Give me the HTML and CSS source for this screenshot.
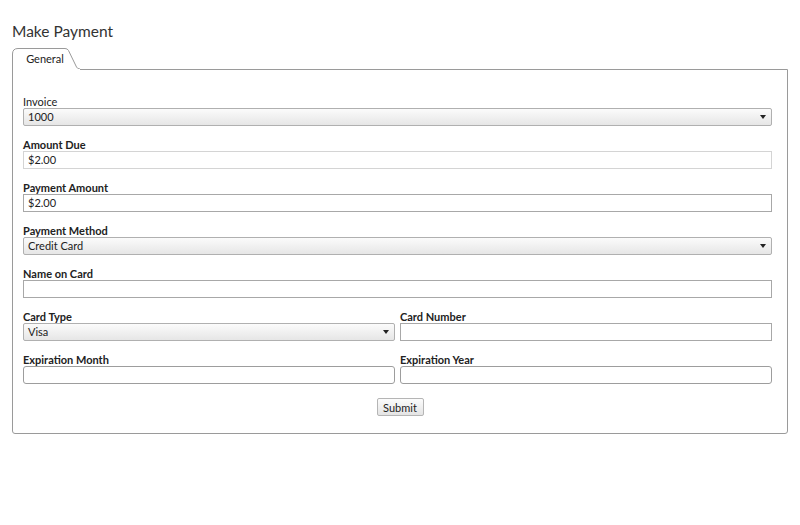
FILE: index.html
```html
<!DOCTYPE html>
<html>
<head>
<meta charset="utf-8">
<link rel="stylesheet" href="styles.css">
</head>
<body>
<h1 class="title">Make Payment</h1>
<div class="tabs">
  <div class="tab">
    <svg class="tab-shape" width="68" height="22" viewBox="0 0 68 22"><path d="M0.5 22 V6 Q0.5 0.5 6 0.5 H53 Q55.5 0.5 56.5 2.5 L64.5 19 Q65.5 21 68 21 V22 Z" fill="#fff" stroke="#9a9a9a" stroke-width="1"/><rect x="1" y="21" width="67" height="1.5" fill="#fff"/></svg>
    <span class="tab-label">General</span>
  </div>
</div>
<div class="panel">
  <div class="field">
    <label class="lbl plain">Invoice</label>
    <div class="select"><span>1000</span><i class="arrow"></i></div>
  </div>
  <div class="field">
    <label class="lbl">Amount Due</label>
    <div class="input light">$2.00</div>
  </div>
  <div class="field">
    <label class="lbl">Payment Amount</label>
    <div class="input">$2.00</div>
  </div>
  <div class="field">
    <label class="lbl">Payment Method</label>
    <div class="select"><span>Credit Card</span><i class="arrow"></i></div>
  </div>
  <div class="field">
    <label class="lbl">Name on Card</label>
    <div class="input"></div>
  </div>
  <div class="row">
    <div class="field">
      <label class="lbl">Card Type</label>
      <div class="select"><span>Visa</span><i class="arrow"></i></div>
    </div>
    <div class="field">
      <label class="lbl">Card Number</label>
      <div class="input"></div>
    </div>
  </div>
  <div class="row">
    <div class="field">
      <label class="lbl">Expiration Month</label>
      <div class="input round"></div>
    </div>
    <div class="field">
      <label class="lbl">Expiration Year</label>
      <div class="input round"></div>
    </div>
  </div>
  <div class="actions">
    <button class="btn">Submit</button>
  </div>
</div>
</body>
</html>
```
FILE: styles.css
```css
html, body {
  margin: 0;
  padding: 0;
  background: #fff;
}
body {
  padding: 0 12px 0 12px;
  font-family: "Lato", "Open Sans", sans-serif;
  color: #222;
}
.title {
  margin: 0;
  padding-top: 21px;
  height: 27px;
  font-size: 15.5px;
  font-weight: 400;
  line-height: 20px;
  color: #333;
}
.tabs {
  display: flex;
  height: 21px;
  position: relative;
  z-index: 2;
}
.tab {
  position: relative;
  width: 68px;
  height: 21px;
}
.tab-shape {
  position: absolute;
  left: 0;
  top: 0;
}
.tab-label {
  position: absolute;
  left: 1px;
  width: 64px;
  top: 5px;
  text-align: center;
  font-size: 11px;
  line-height: 12px;
  color: #222;
}
.panel {
  width: 776px;
  height: 365px;
  box-sizing: border-box;
  border: 1px solid #9a9a9a;
  border-radius: 0 0 3px 3px;
  padding: 25px 15px 0 10px;
  display: flex;
  flex-direction: column;
}
.row {
  display: flex;
  gap: 5px;
}
.row .field {
  flex: 1;
}
.field {
  display: flex;
  flex-direction: column;
  margin-bottom: 12px;
}
.row .field {
  margin-bottom: 12px;
}
.lbl {
  font-size: 11px;
  line-height: 13px;
  font-weight: 700;
  color: #222;
}
.lbl.plain {
  font-weight: 400;
}
.input, .select {
  height: 18px;
  box-sizing: border-box;
  font-size: 11px;
  line-height: 16px;
  padding: 0 4px;
  color: #222;
}
.input {
  border: 1px solid #a8a8a8;
  background: #fff;
}
.input.light {
  border-color: #d4d4d4;
}
.input.round {
  border-radius: 3px;
  border-color: #9d9d9d;
}
.select {
  border: 1px solid #b0b0b0;
  border-radius: 2px;
  background: linear-gradient(#fbfbfb, #e6e6e6);
  display: flex;
  align-items: center;
  justify-content: space-between;
  padding-right: 4px;
}
.arrow {
  display: block;
  width: 0;
  height: 0;
  border-left: 3px solid transparent;
  border-right: 3px solid transparent;
  border-top: 4px solid #222;
  margin-right: 1px;
}
.actions {
  display: flex;
  justify-content: center;
  padding-top: 2px;
  padding-left: 5px;
}
.btn {
  height: 18px;
  width: 47px;
  padding: 0;
  font-family: inherit;
  font-size: 11px;
  line-height: 15px;
  color: #222;
  border: 1px solid #b5b5b5;
  border-radius: 2px;
  background: linear-gradient(#fcfcfc, #e4e4e4);
}
```
